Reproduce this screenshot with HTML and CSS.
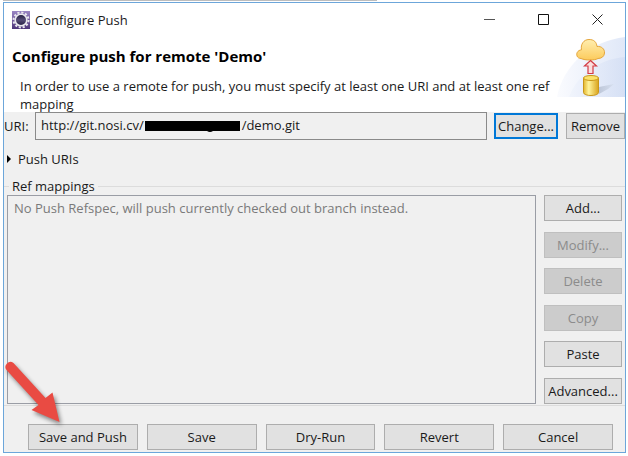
FILE: index.html
```html
<!DOCTYPE html>
<html lang="en">
<head>
<meta charset="utf-8">
<title>Configure Push</title>
<link rel="stylesheet" href="styles.css">
</head>
<body>
<div class="backdrop-edge"></div>
<main class="dialog">
  <header class="titlebar">
    <svg class="app-icon" viewBox="0 0 18 18" aria-hidden="true">
      <defs>
        <linearGradient id="app" x2="0" y2="1"><stop stop-color="#9a86c4"/><stop offset="1" stop-color="#4d3479"/></linearGradient>
        <linearGradient id="core" x2="0" y2="1"><stop stop-color="#1d1839"/><stop offset=".5" stop-color="#554c76"/><stop offset="1" stop-color="#211b40"/></linearGradient>
      </defs>
      <rect width="18" height="18" fill="url(#app)"/>
      <circle cx="9" cy="9" r="7.500" fill="none" stroke="#e9e7ee" stroke-width="2" stroke-dasharray="2.200 1.727"/>
      <circle cx="9" cy="9" r="5.800" fill="url(#core)" stroke="#e9e7ee" stroke-width="1.600"/>
    </svg>
    <span class="title">Configure Push</span>
    <button class="window-button" type="button" aria-label="Minimize"><svg viewBox="0 0 12 12"><path d="M0 5.500h11" stroke="#555"/></svg></button>
    <button class="window-button" type="button" aria-label="Maximize"><svg viewBox="0 0 12 12"><path d="M.5 .5h10v10H.5z" fill="none" stroke="#111"/></svg></button>
    <button class="window-button" type="button" aria-label="Close"><svg viewBox="0 0 12 12"><path d="M.5 .5l10 10m0-10l-10 10" stroke="#222"/></svg></button>
  </header>

  <section class="banner">
    <div class="banner-text">
      <h1>Configure push for remote 'Demo'</h1>
      <p>In order to use a remote for push, you must specify at least one URI and at least one ref mapping</p>
    </div>
    <svg class="banner-art" viewBox="0 0 68 60" aria-hidden="true">
      <defs>
        <linearGradient id="sky"><stop stop-color="#fafbfe"/><stop offset="1" stop-color="#e0e8f8"/></linearGradient>
        <linearGradient id="hill"><stop stop-color="#f0f4fc"/><stop offset="1" stop-color="#d3def4"/></linearGradient>
        <linearGradient id="cloud" x2="0" y2="1"><stop stop-color="#ffeeb0"/><stop offset="1" stop-color="#fccb5c"/></linearGradient>
        <linearGradient id="drum"><stop stop-color="#e3b52c"/><stop offset=".35" stop-color="#fff49b"/><stop offset="1" stop-color="#d9a31c"/></linearGradient>
        <linearGradient id="shade"><stop stop-color="#aeb8cb"/><stop offset="1" stop-color="#d4ddec"/></linearGradient>
      </defs>
      <path d="M0 60C6 28 34 4 68 0v60z" fill="url(#sky)"/>
      <path d="M12 60C20 38 42 22 68 20v40z" fill="url(#hill)" opacity=".8"/>
      <path d="M42 57V50l15-3-6 5-9 5z" fill="url(#shade)" opacity=".7"/>
      <path d="M24 21.500C18.500 21.500 18 13.500 24.500 12.800C23.500 7.500 26.500 2.500 32 2.500C37 2.500 39.500 5 40 9.500C44.500 9 47.800 12 47.500 16C47.300 19.500 44.500 21.500 41 21.500C38 23.500 28 23.500 24 21.500Z" fill="url(#cloud)" stroke="#e5a63c"/>
      <path d="M33.500 23.500l6 5.500h-3.500v7.500h-5V29h-3.500z" fill="#fbdede" stroke="#d33b44" stroke-width="1.200"/>
      <path d="M26.500 41v14.500c0 4 15 4 15 0V41z" fill="url(#drum)" stroke="#c9971a"/>
      <ellipse cx="34" cy="41" rx="7.500" ry="2.500" fill="#fbe36a" stroke="#c9971a"/>
    </svg>
  </section>

  <div class="uri-row">
    <label for="uri">URI:</label>
    <div class="uri-field">
      <input id="uri" type="text" readonly value="http://git.nosi.cv/                             /demo.git">
      <svg class="redaction" viewBox="0 0 95 11" aria-hidden="true"><path d="M0 0h95v10H68q-3 2-6 0H0z"/></svg>
    </div>
    <button class="button focused" type="button">Change...</button>
    <button class="button remove" type="button">Remove</button>
  </div>

  <button class="expander" type="button" aria-expanded="false"><svg viewBox="0 0 4 8" aria-hidden="true"><path d="M0 0l4 4-4 4z"/></svg>Push URIs</button>

  <section class="group" aria-labelledby="refs">
    <div class="group-heading"><h2 id="refs">Ref mappings</h2></div>
    <div class="group-body">
      <div class="ref-list">No Push Refspec, will push currently checked out branch instead.</div>
      <div class="side-buttons">
        <button class="button" type="button">Add...</button>
        <button class="button" type="button" disabled>Modify...</button>
        <button class="button" type="button" disabled>Delete</button>
        <button class="button" type="button" disabled>Copy</button>
        <button class="button" type="button">Paste</button>
        <button class="button" type="button">Advanced...</button>
      </div>
    </div>
  </section>

  <footer class="actions">
    <button class="button" type="button">Save and Push</button>
    <button class="button" type="button">Save</button>
    <button class="button" type="button">Dry-Run</button>
    <button class="button" type="button">Revert</button>
    <button class="button" type="button">Cancel</button>
    <svg class="pointer" viewBox="0 0 64 72" aria-hidden="true">
      <path d="M9.500 7L41.500 42L48.500 36.500L55.500 66L27.500 54L34.500 49L2.500 14A5 5 0 0 1 9.500 7Z"/>
    </svg>
  </footer>
</main>
</body>
</html>
```

FILE: styles.css
```css
* {
  box-sizing: border-box;
}

body {
  display: flex;
  flex-direction: column;
  min-height: 100vh;
  margin: 0;
  padding: 0 2px 3px 3px;
  background: #fff;
  color: #1a1a1a;
  font: 13px/18px "Open Sans", "Noto Sans", sans-serif;
}

.backdrop-edge {
  width: 60%;
  height: 1px;
  margin-bottom: 1px;
  background: #bdbdbd;
}

.dialog {
  display: flex;
  flex: 1;
  flex-direction: column;
  border: 1px solid #6ca6da;
  background: #f0f0f0;
}

button,
input {
  color: inherit;
  font: inherit;
}

.titlebar {
  display: flex;
  align-items: center;
  height: 34px;
  padding-left: 8px;
  background: #fff;
}

.app-icon {
  width: 18px;
  height: 18px;
}

.title {
  flex: 1;
  margin-left: 5px;
}

.window-button {
  display: grid;
  place-items: center;
  width: 54px;
  height: 32px;
  padding: 0;
  border: 0;
  background: none;
}

.window-button svg {
  width: 12px;
  height: 12px;
}

.banner {
  display: flex;
  justify-content: space-between;
  height: 75px;
  background: #fff;
}

.banner-text {
  padding: 9px 0 0 8px;
}

h1 {
  margin: 0 0 11px;
  color: #000;
  font-size: 15px;
  line-height: 20px;
}

.banner p {
  margin: 0 0 0 8px;
}

.banner-art {
  flex: none;
  width: 68px;
  height: 60px;
}

.uri-row {
  display: flex;
  align-items: center;
}

.uri-row label {
  width: 31px;
}

.uri-field {
  position: relative;
  flex: 1;
  margin-right: 7px;
}

.uri-field input {
  display: block;
  width: 100%;
  height: 28px;
  padding: 0 5px 2px;
  border: 1px solid #8a8a8a;
  background: #f0f0f0;
  outline: 0;
}

.redaction {
  position: absolute;
  top: 9px;
  left: 110px;
  width: 95px;
  height: 11px;
}

.button {
  height: 26px;
  padding: 0;
  border: 1px solid #adadad;
  background: #e1e1e1;
  white-space: nowrap;
}

.button:disabled {
  border-color: #bfbfbf;
  background: #ccc;
  color: #8b8b8b;
}

.uri-row .button {
  width: 64px;
}

.uri-row .focused {
  margin-right: 8px;
  border: 2px solid #0078d7;
}

.uri-row .remove {
  width: 59px;
}

.expander {
  display: flex;
  align-items: center;
  align-self: flex-start;
  height: 37px;
  padding: 0 0 0 3px;
  border: 0;
  background: none;
}

.expander svg {
  width: 4px;
  height: 8px;
  margin-right: 7px;
}

.group {
  display: flex;
  flex: 1;
  flex-direction: column;
  border-bottom: 1px solid #dcdcdc;
}

.group-heading {
  display: flex;
  align-items: center;
  height: 18px;
}

.group-heading::before,
.group-heading::after {
  width: 5px;
  height: 1px;
  background: #dcdcdc;
  content: "";
}

.group-heading::after {
  flex: 1;
}

h2 {
  margin: 0 3px;
  font-size: inherit;
  font-weight: 400;
}

.group-body {
  display: flex;
  flex: 1;
  padding: 0 3px 1px;
}

.ref-list {
  flex: 1;
  margin-right: 8px;
  padding: 3px 6px;
  border: 1px solid #9a9da5;
  color: #7a7a7a;
}

.side-buttons {
  display: flex;
  flex-direction: column;
  justify-content: space-between;
  width: 78px;
}

.actions {
  position: relative;
  display: flex;
  gap: 9px;
  padding: 18px 12px 2px 24px;
}

.actions .button {
  flex: 1;
}

.pointer {
  position: absolute;
  bottom: 24px;
  left: 0;
  width: 64px;
  height: 72px;
  fill: #e94b43;
  filter: drop-shadow(2px 3px 2px rgb(0 0 0 / 45%));
  pointer-events: none;
}
```
